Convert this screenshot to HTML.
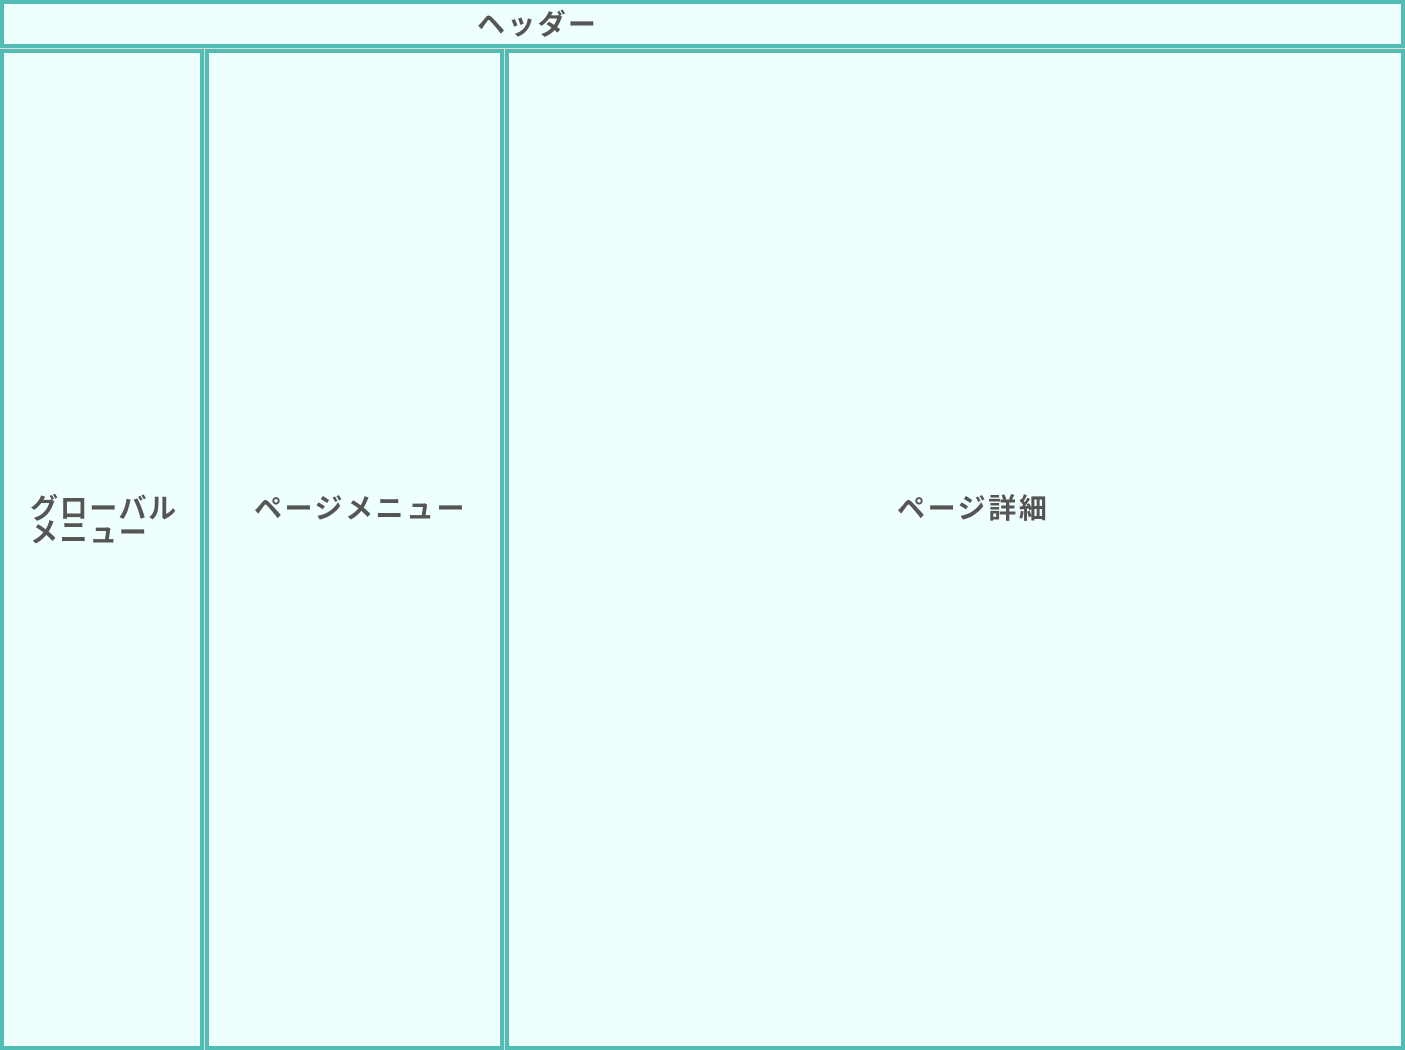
<!DOCTYPE html>
<html><head><meta charset="utf-8"><style>
html,body{margin:0;padding:0;width:1405px;height:1050px;background:#dcdcdc;overflow:hidden;position:relative}
.b{position:absolute;box-sizing:border-box;border:4px solid #52bdb5;background:#effffd}
.t{position:absolute;font-family:"Liberation Sans","Noto Sans CJK JP",sans-serif;font-weight:bold;font-size:28px;color:#555;white-space:nowrap;line-height:24px}
</style></head><body>
<div class="b" style="left:0;top:0;width:1405px;height:48px"></div>
<div class="b" style="left:0;top:49px;width:204px;height:1001px"></div>
<div class="b" style="left:205px;top:49px;width:299px;height:1001px"></div>
<div class="b" style="left:505px;top:49px;width:900px;height:1001px"></div>
<div class="t" style="left:477px;top:13px;letter-spacing:2.3px">ヘッダー</div>
<div class="t" style="left:30px;top:497px;letter-spacing:1.6px">グローバル<br>メニュー</div>
<div class="t" style="left:254px;top:497px;letter-spacing:2.5px">ページメニュー</div>
<div class="t" style="left:897px;top:497px;letter-spacing:2.6px">ページ詳細</div>
</body></html>
